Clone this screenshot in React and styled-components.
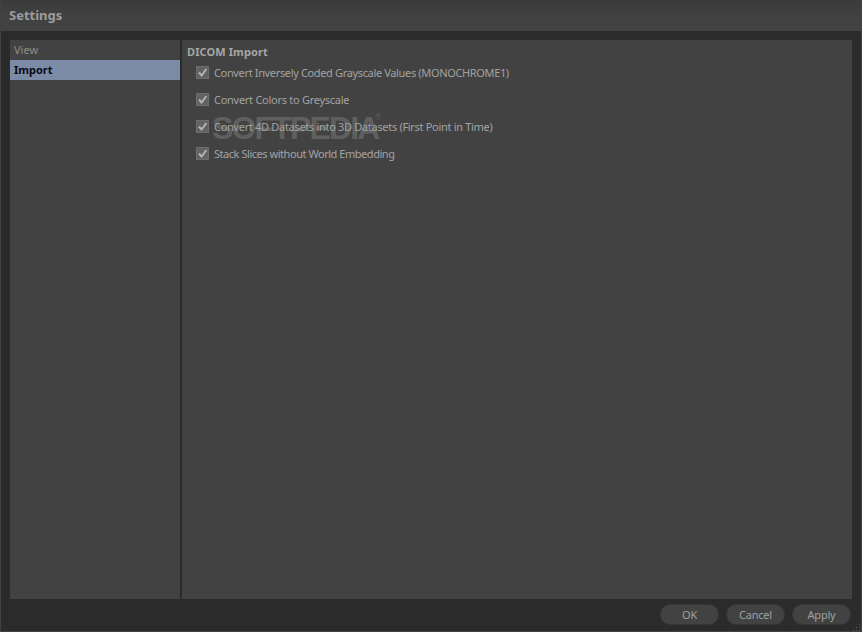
import React from "react";
import styled, { createGlobalStyle } from "styled-components";

const GlobalStyle = createGlobalStyle`
  html, body {
    margin: 0;
    padding: 0;
    background: #2b2b2b;
  }
`

const Window = styled.div`
  position: relative;
  box-sizing: border-box;
  width: 862px;
  height: 632px;
  display: flex;
  flex-direction: column;
  overflow: hidden;
  background: #2b2b2b;
  border: 1px solid #424242;
  border-top: 0;
  font-family: "Noto Sans", Tahoma, sans-serif;
  font-size: 11px;
  color: #a8a8a8;
`

const TitleBar = styled.div`
  box-sizing: border-box;
  height: 31px;
  margin: 0 -1px;
  padding: 0 0 1px 9px;
  display: flex;
  align-items: center;
  flex-shrink: 0;
  background: linear-gradient(#3b3b3b, #424242 60%, #424242);
  font-size: 13px;
  font-weight: bold;
  color: #9d9d9d;
`

const Body = styled.div`
  flex: 1;
  min-height: 0;
  display: flex;
  gap: 2px;
  padding: 9px 9px 0 9px;
`

const Sidebar = styled.div`
  width: 170px;
  flex-shrink: 0;
  background: #424242;
`

const SidebarItem = styled.div`
  box-sizing: border-box;
  height: 20px;
  padding: 0 0 1px 4px;
  display: flex;
  align-items: center;
  color: ${(props) => (props.$active ? "#0a0a14" : "#8f8f8f")};
  font-weight: ${(props) => (props.$active ? "bold" : "normal")};
  background: ${(props) => (props.$active ? "#7b8ba5" : "transparent")};
`

const Content = styled.div`
  flex: 1;
  padding: 4px 5px 0 5px;
  background: #424242;
`

const GroupTitle = styled.div`
  height: 15px;
  line-height: 15px;
  font-weight: bold;
  letter-spacing: 0.1px;
  color: #a6a6a6;
`

const OptionList = styled.div`
  display: flex;
  flex-direction: column;
  padding: 7px 0 0 9px;
`

const Option = styled.label`
  height: ${(props) => props.$height}px;
  display: flex;
  align-items: flex-start;
  gap: 5px;
  color: #a3a3a3;
  white-space: nowrap;
`

const Box = styled.span`
  box-sizing: border-box;
  width: 13px;
  height: 13px;
  flex-shrink: 0;
  display: flex;
  align-items: center;
  justify-content: center;
  background: #626262;
  border: 1px solid #6e6e6e;
`

/* z-index keeps the label readable above the watermark */
const OptionText = styled.span`
  position: relative;
  z-index: 1;
  line-height: 14px;
  letter-spacing: ${(props) => props.$spacing}px;
`

const Footer = styled.div`
  box-sizing: border-box;
  height: 32px;
  flex-shrink: 0;
  display: flex;
  justify-content: flex-end;
  gap: 7px;
  padding: 5px 10px 0 0;
`

const Button = styled.button`
  box-sizing: border-box;
  width: 59px;
  height: 21px;
  padding: 0 0 1px 0;
  border: 1px solid #363636;
  border-radius: 10px;
  background: #424242;
  color: #a0a0a0;
  font-family: inherit;
  font-size: 11px;
  letter-spacing: -0.2px;
`

const Watermark = styled.div`
  position: absolute;
  left: 211px;
  top: 110px;
  font-family: "Liberation Sans", Arial, sans-serif;
  font-size: 32px;
  font-weight: bold;
  line-height: 36px;
  letter-spacing: -1.85px;
  color: rgba(104, 104, 104, 0.8);
  pointer-events: none;
`

const WatermarkMark = styled.span`
  position: absolute;
  left: 163px;
  top: 3px;
  font-size: 9px;
  font-weight: normal;
  line-height: 9px;
  letter-spacing: 0;
`

const Grip = styled.svg`
  position: absolute;
  right: 0;
  bottom: 0;
`

const options = [
  { text: "Convert Inversely Coded Grayscale Values (MONOCHROME1)", height: 27, spacing: -0.35 },
  { text: "Convert Colors to Greyscale", height: 27, spacing: -0.27 },
  { text: "Convert 4D Datasets into 3D Datasets (First Point in Time)", height: 27, spacing: -0.31 },
  { text: "Stack Slices without World Embedding", height: 20, spacing: -0.46 },
];

const Check = () => (
  <svg width="11" height="11" viewBox="0 0 11 11">
    <path d="M2 5.5 L4.6 8.5 L9.4 2" fill="none" stroke="#b4b4b4" strokeWidth="2" />
  </svg>
);

const App = () => {
  return (
    <Window>
      <GlobalStyle />
      <TitleBar>Settings</TitleBar>
      <Body>
        <Sidebar>
          <SidebarItem>View</SidebarItem>
          <SidebarItem $active>Import</SidebarItem>
        </Sidebar>
        <Content>
          <GroupTitle>DICOM Import</GroupTitle>
          <OptionList>
            {options.map((option) => (
              <Option key={option.text} $height={option.height}>
                <Box>
                  <Check />
                </Box>
                <OptionText $spacing={option.spacing}>{option.text}</OptionText>
              </Option>
            ))}
          </OptionList>
        </Content>
      </Body>
      <Footer>
        <Button>OK</Button>
        <Button>Cancel</Button>
        <Button>Apply</Button>
      </Footer>
      <Watermark>
        SOFTPEDIA
        <WatermarkMark>®</WatermarkMark>
      </Watermark>
      <Grip width="8" height="8" viewBox="0 0 8 8">
        <path d="M6 1h1v1H6zM3 4h1v1H3zM6 4h1v1H6zM0 7h1v1H0zM3 7h1v1H3zM6 7h1v1H6z" fill="#5c5c5c" />
      </Grip>
    </Window>
  );
};

export default App;
